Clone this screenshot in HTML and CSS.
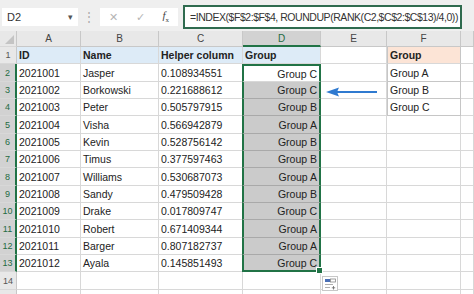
FILE: index.html
```html
<!DOCTYPE html>
<html lang="en">
<head>
  <meta charset="UTF-8">
  <title>Group by rank</title>
  <link rel="stylesheet" href="styles.css">
</head>
<body>
  <!-- formula bar -->
  <div class="formula-bar">
    <div class="namebox">D2 <span class="caret">&#9662;</span></div>
    <div class="dots">&#8942;</div>
    <div class="fbuttons">
      <span class="fbtn">&#10005;</span>
      <span class="fbtn">&#10003;</span>
      <span class="fbtn fx"><i>f</i><sub>x</sub></span>
    </div>
    <div class="formula">=INDEX($F$2:$F$4, ROUNDUP(RANK(C2,$C$2:$C$13)/4,0))</div>
  </div>

  <div class="sheet">
    <div class="grid" id="grid"></div>

    <svg class="arrow" width="52" height="10" viewBox="0 0 52 10">
      <line x1="10" y1="5" x2="51" y2="5" stroke="#2f7ad0" stroke-width="2"/>
      <polygon points="0,5 13,0.5 11,5 13,9.5" fill="#2f7ad0"/>
    </svg>

    <div class="paste-icon">
      <svg width="13" height="12" viewBox="0 0 13 12">
        <rect x="1" y="1" width="5" height="3" fill="#4a6fb5"/>
        <rect x="6.5" y="1" width="5" height="3" fill="none" stroke="#888" stroke-width="0.8"/>
        <line x1="1" y1="6.5" x2="9" y2="6.5" stroke="#999" stroke-width="0.8"/>
        <line x1="1" y1="9.5" x2="6" y2="9.5" stroke="#999" stroke-width="0.8"/>
        <line x1="9.5" y1="8" x2="9.5" y2="11.5" stroke="#666" stroke-width="0.8"/>
        <line x1="7.8" y1="9.8" x2="11.2" y2="9.8" stroke="#666" stroke-width="0.8"/>
      </svg>
    </div>
  </div>

  <script>
    const rows = [
      ['2021001', 'Jasper', '0.108934551', 'Group C'],
      ['2021002', 'Borkowski', '0.221688612', 'Group C'],
      ['2021003', 'Peter', '0.505797915', 'Group B'],
      ['2021004', 'Visha', '0.566942879', 'Group A'],
      ['2021005', 'Kevin', '0.528756142', 'Group B'],
      ['2021006', 'Timus', '0.377597463', 'Group B'],
      ['2021007', 'Williams', '0.530687073', 'Group A'],
      ['2021008', 'Sandy', '0.479509428', 'Group B'],
      ['2021009', 'Drake', '0.017809747', 'Group C'],
      ['2021010', 'Robert', '0.671409344', 'Group A'],
      ['2021011', 'Barger', '0.807182737', 'Group A'],
      ['2021012', 'Ayala', '0.145851493', 'Group C'],
    ];
    const lookup = ['Group A', 'Group B', 'Group C'];

    const grid = document.getElementById('grid');

    function cell(text, cls) {
      let d = document.createElement('div');
      d.className = 'cell ' + (cls || '');
      d.textContent = text || '';
      grid.appendChild(d);
    }

    // column headers
    cell('', 'corner');
    ['A', 'B', 'C', 'D', 'E', 'F', ''].forEach(l => cell(l, 'colhead' + (l === 'D' ? ' selhead' : '')));

    // row 1
    cell('1', 'rownum');
    cell('ID', 'head');
    cell('Name', 'head');
    cell('Helper column', 'head');
    cell('Group', 'head');
    cell('', '');
    cell('Group', 'head peach');
    cell('', '');

    // rows 2 to 13
    rows.forEach((r, i) => {
      cell(String(i + 2), 'rownum selrow');
      cell(r[0], '');
      cell(r[1], '');
      cell(r[2], '');
      let cls = 'num sel' + (i === 0 ? ' active top' : '') + (i === rows.length - 1 ? ' bottom' : '');
      cell(r[3], cls);
      cell('', '');
      cell(i < 3 ? lookup[i] : '', i < 3 ? 'lookup' : '');
      cell('', '');
    });

    // rows 14 and 15
    cell('14', 'rownum');
    for (let c = 0; c < 7; c++) cell('', '');
    cell('', 'rownum');
    for (let c = 0; c < 7; c++) cell('', '');
  </script>
</body>
</html>
```

FILE: styles.css
```css
body {
  margin: 0;
  font-family: "Liberation Sans", Arial, sans-serif;
  background: #fff;
  width: 474px;
  height: 294px;
  overflow: hidden;
}
.formula-bar {
  height: 31px;
  background: #efefef;
  display: flex;
  align-items: center;
  box-sizing: border-box;
  padding: 0 0 0 2px;
}
.namebox {
  width: 76px;
  height: 18px;
  background: #fff;
  box-sizing: border-box;
  display: flex;
  align-items: center;
  justify-content: space-between;
  padding: 0 5px 0 5px;
  font-size: 11px;
  color: #333;
  margin-top: 3px;
}
.caret {
  font-size: 9px;
  color: #555;
}
.dots {
  width: 22px;
  text-align: center;
  color: #aaa;
  font-size: 12px;
  margin-top: 3px;
}
.fbuttons {
  width: 78px;
  height: 18px;
  background: #fff;
  display: flex;
  align-items: center;
  justify-content: space-around;
  margin-top: 3px;
}
.fbtn {
  color: #b5b5b5;
  font-size: 11px;
}
.fx {
  color: #444;
  font-family: "Liberation Serif", serif;
  font-size: 11px;
}
.fx sub {
  font-size: 7px;
}
.formula {
  margin-left: 5px;
  width: 279px;
  height: 24px;
  border: 2px solid #2f6b4f;
  box-sizing: border-box;
  background: #fff;
  font-size: 10.5px;
  letter-spacing: -0.45px;
  color: #333;
  display: flex;
  align-items: center;
  padding-left: 5px;
  white-space: nowrap;
  overflow: hidden;
  margin-top: 3px;
}
.sheet {
  position: relative;
}
.grid {
  display: grid;
  grid-template-columns: 17px 64px 78px 84px 78px 66px 74px 13px;
  grid-template-rows: 16px;
  grid-auto-rows: 17.35px;
  font-size: 10.5px;
  color: #222;
}
.cell {
  border-right: 1px solid #d8d8d8;
  border-bottom: 1px solid #d8d8d8;
  box-sizing: border-box;
  padding: 0 2px;
  display: flex;
  align-items: center;
  white-space: nowrap;
  overflow: hidden;
}
.corner {
  background: #e8e8e8;
  border-right-color: #c8c8c8;
  position: relative;
}
.corner::after {
  content: "";
  position: absolute;
  right: 2px;
  bottom: 2px;
  border-left: 9px solid transparent;
  border-bottom: 9px solid #c4c4c4;
}
.colhead {
  background: #e8e8e8;
  justify-content: center;
  color: #444;
  font-size: 10px;
  border-right-color: #c8c8c8;
  border-bottom-color: #c8c8c8;
}
.selhead {
  background: #d2d2d2;
  color: #1f6b43;
  border-bottom: 2px solid #217346;
}
.rownum {
  background: #e8e8e8;
  justify-content: center;
  color: #555;
  font-size: 9px;
  padding: 0;
  border-right-color: #c8c8c8;
}
.selrow {
  background: #d2d2d2;
  color: #1f6b43;
  border-right: 2px solid #217346;
}
.head {
  background: #ddebf7;
  font-weight: bold;
}
.peach {
  background: #fce4d6;
  border-left: 1px solid #c6c6c6;
  border-right-color: #c6c6c6;
}
.lookup {
  border-left: 1px solid #c6c6c6;
  border-right-color: #c6c6c6;
  border-bottom-color: #c6c6c6;
}
.num {
  justify-content: flex-end;
}
.sel {
  background: #cbcbcb;
  border-bottom-color: #a9a9a9;
  border-left: 2px solid #217346;
  border-right: 2px solid #217346;
  margin-left: -1px;
}
.active {
  background: #fff;
  border-bottom-color: #d8d8d8;
}
.top {
  border-top: 2px solid #217346;
}
.bottom {
  border-bottom: 2px solid #217346;
  position: relative;
  overflow: visible;
}
.bottom::after {
  content: "";
  position: absolute;
  right: -4px;
  bottom: -4px;
  width: 5px;
  height: 5px;
  background: #217346;
  border: 1px solid #fff;
}
.arrow {
  position: absolute;
  left: 326px;
  top: 56px;
}
.paste-icon {
  position: absolute;
  left: 322px;
  top: 245px;
  width: 14px;
  height: 13px;
  border: 1px solid #c8c8c8;
  background: #fff;
  display: flex;
  align-items: center;
  justify-content: center;
}
```
